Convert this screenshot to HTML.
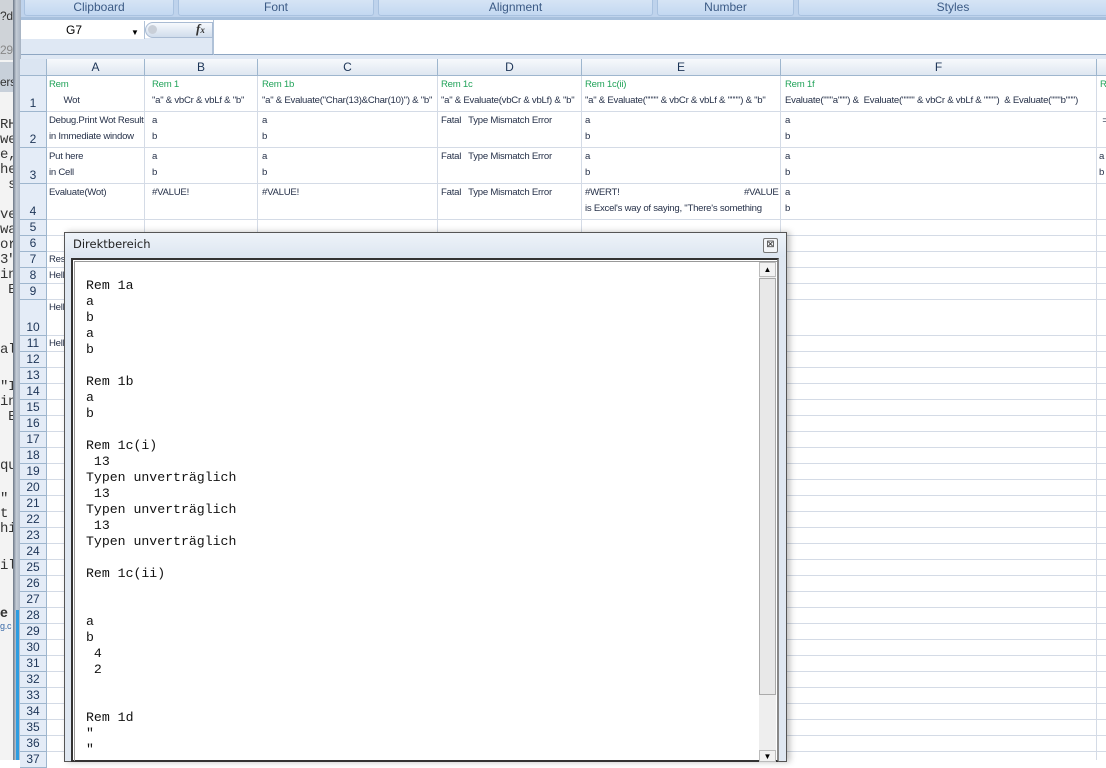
<!DOCTYPE html>
<html><head><meta charset="utf-8"><style>
*{margin:0;padding:0;box-sizing:border-box}
body{width:1106px;height:760px;overflow:hidden;position:relative;background:#fff;font-family:"Liberation Sans",Arial,sans-serif}
.a{position:absolute}
.hl{position:absolute;height:1px;background:#d4dbe6}
.vl{position:absolute;width:1px;background:#d4dbe6}
.rh{position:absolute;left:20px;width:27px;background:#e4ecf7;border-bottom:1px solid #9eb6ce;border-right:1px solid #9eb6ce;font-size:12px;color:#1d3557;text-align:center;display:flex;align-items:flex-end;justify-content:center;padding-bottom:1px}
.ch{position:absolute;top:59px;height:17px;background:linear-gradient(#f7f9fc,#dfe7f1);border-right:1px solid #9eb6ce;border-bottom:1px solid #9eb6ce;font-size:12px;color:#1d3557;text-align:center;line-height:16px}
.t{position:absolute;font-size:9.6px;line-height:16px;color:#27324a;white-space:pre;letter-spacing:-0.25px}
.g{color:#22a35a}
.grp{position:absolute;top:0;height:16px;background:linear-gradient(#d6e4f5,#c3d8f1);border:1px solid #a9c2e0;border-top:none;border-radius:0 0 3px 3px;font-size:12px;color:#3b5a85;text-align:center;line-height:15px}
.mono{position:absolute;left:86px;top:262px;font-family:"Liberation Mono","Courier New",monospace;font-size:13.2px;line-height:16px;color:#111;white-space:pre}
</style></head><body>
<div class="a" style="left:0;top:0;width:14px;height:760px;background:#f3f3f3"></div>
<div class="a" style="left:0;top:0;width:14px;height:60px;background:#cfd3d8"></div>
<div class="a" style="left:0;top:62px;width:14px;height:30px;background:#c8d0da"></div>
<div class="t" style="left:0;top:8px;font-size:12px;color:#333">?d</div>
<div class="t" style="left:0;top:42px;font-size:12px;color:#888">29</div>
<div class="t" style="left:0;top:74px;font-size:12px;color:#333">ers</div>
<div class="t" style="left:0;top:118px;font-size:14px;color:#333;line-height:15px;font-family:'Liberation Mono',monospace">RH
we
e,
he
 s

ve
wa
or
3"
ini
 E</div>
<div class="t" style="left:0;top:342px;font-size:14px;color:#333;font-family:'Liberation Mono',monospace">ale</div>
<div class="t" style="left:0;top:380px;font-size:14px;color:#333;line-height:15px;font-family:'Liberation Mono',monospace">"I
ini
 E</div>
<div class="t" style="left:0;top:458px;font-size:14px;color:#333;font-family:'Liberation Mono',monospace">qu</div>
<div class="t" style="left:0;top:492px;font-size:14px;color:#333;line-height:15px;font-family:'Liberation Mono',monospace">"
t
hi</div>
<div class="t" style="left:0;top:558px;font-size:14px;color:#333;font-family:'Liberation Mono',monospace">ill</div>
<div class="t" style="left:0;top:604px;font-size:14px;font-weight:bold;color:#333">e</div>
<div class="t" style="left:0;top:618px;font-size:9px;color:#3a6aa8">g.c</div>
<div class="a" style="left:13px;top:0;width:8px;height:760px;background:linear-gradient(90deg,#6b7686,#c4ccd6 40%,#a6b2c2)"></div>
<div class="a" style="left:16px;top:610px;width:3px;height:150px;background:#2d9ce0"></div>

<div class="a" style="left:21px;top:0;width:1085px;height:19px;background:#bfd3ec"></div>
<div class="grp" style="left:24px;width:150px">Clipboard</div>
<div class="grp" style="left:178px;width:196px">Font</div>
<div class="grp" style="left:378px;width:275px">Alignment</div>
<div class="grp" style="left:657px;width:137px">Number</div>
<div class="grp" style="left:798px;width:310px">Styles</div>
<div class="a" style="left:21px;top:17px;width:1085px;height:3px;background:#a7c0dd"></div>
<div class="a" style="left:21px;top:20px;width:1085px;height:35px;background:#fff;border-bottom:1px solid #8ea6c2"></div>
<div class="a" style="left:21px;top:38px;width:192px;height:16px;background:#dfe8f4;border-right:1px solid #b0c2d8"></div>
<div class="a" style="left:21px;top:21px;width:124px;height:18px;background:#fff;border-right:1px solid #b0c2d8;font-size:12px;line-height:18px;padding-left:45px;color:#000">G7</div>
<div class="a" style="left:131px;top:28px;font-size:8px">▼</div>
<div class="a" style="left:145px;top:22px;width:68px;height:16px;background:linear-gradient(#f6f9fd,#d1ddec);border-radius:8px 0 0 8px;border:1px solid #a9bbd3"></div>
<div class="a" style="left:148px;top:25px;width:9px;height:9px;border-radius:50%;background:#c9cfd8"></div>
<div class="a" style="left:196px;top:21px;font-family:'Liberation Serif',serif;font-style:italic;font-weight:bold;font-size:13px;color:#333">f<span style="font-size:9px">x</span></div>
<div class="a" style="left:213px;top:20px;width:1px;height:35px;background:#b0c2d8"></div>
<div class="a" style="left:21px;top:55px;width:1085px;height:4px;background:#dfe8f4"></div>

<div class="a" style="left:20px;top:59px;width:27px;height:17px;background:#dbe5f2;border-right:1px solid #9eb6ce;border-bottom:1px solid #9eb6ce"></div>
<div class="ch" style="left:47px;width:98px">A</div>
<div class="ch" style="left:145px;width:113px">B</div>
<div class="ch" style="left:258px;width:180px">C</div>
<div class="ch" style="left:438px;width:144px">D</div>
<div class="ch" style="left:582px;width:199px">E</div>
<div class="ch" style="left:781px;width:316px">F</div>
<div class="ch" style="left:1097px;width:20px"></div>

<div class="vl" style="left:144px;top:76px;height:684px"></div>
<div class="vl" style="left:257px;top:76px;height:684px"></div>
<div class="vl" style="left:437px;top:76px;height:684px"></div>
<div class="vl" style="left:581px;top:76px;height:684px"></div>
<div class="vl" style="left:780px;top:76px;height:684px"></div>
<div class="vl" style="left:1096px;top:76px;height:684px"></div>

<div class="rh" style="top:76px;height:36px">1</div><div class="hl" style="left:47px;top:111px;width:1059px"></div>
<div class="rh" style="top:112px;height:36px">2</div><div class="hl" style="left:47px;top:147px;width:1059px"></div>
<div class="rh" style="top:148px;height:36px">3</div><div class="hl" style="left:47px;top:183px;width:1059px"></div>
<div class="rh" style="top:184px;height:36px">4</div><div class="hl" style="left:47px;top:219px;width:1059px"></div>
<div class="rh" style="top:220px;height:16px">5</div><div class="hl" style="left:47px;top:235px;width:1059px"></div>
<div class="rh" style="top:236px;height:16px">6</div><div class="hl" style="left:47px;top:251px;width:1059px"></div>
<div class="rh" style="top:252px;height:16px">7</div><div class="hl" style="left:47px;top:267px;width:1059px"></div>
<div class="rh" style="top:268px;height:16px">8</div><div class="hl" style="left:47px;top:283px;width:1059px"></div>
<div class="rh" style="top:284px;height:16px">9</div><div class="hl" style="left:47px;top:299px;width:1059px"></div>
<div class="rh" style="top:300px;height:36px">10</div><div class="hl" style="left:47px;top:335px;width:1059px"></div>
<div class="rh" style="top:336px;height:16px">11</div><div class="hl" style="left:47px;top:351px;width:1059px"></div>
<div class="rh" style="top:352px;height:16px">12</div><div class="hl" style="left:47px;top:367px;width:1059px"></div>
<div class="rh" style="top:368px;height:16px">13</div><div class="hl" style="left:47px;top:383px;width:1059px"></div>
<div class="rh" style="top:384px;height:16px">14</div><div class="hl" style="left:47px;top:399px;width:1059px"></div>
<div class="rh" style="top:400px;height:16px">15</div><div class="hl" style="left:47px;top:415px;width:1059px"></div>
<div class="rh" style="top:416px;height:16px">16</div><div class="hl" style="left:47px;top:431px;width:1059px"></div>
<div class="rh" style="top:432px;height:16px">17</div><div class="hl" style="left:47px;top:447px;width:1059px"></div>
<div class="rh" style="top:448px;height:16px">18</div><div class="hl" style="left:47px;top:463px;width:1059px"></div>
<div class="rh" style="top:464px;height:16px">19</div><div class="hl" style="left:47px;top:479px;width:1059px"></div>
<div class="rh" style="top:480px;height:16px">20</div><div class="hl" style="left:47px;top:495px;width:1059px"></div>
<div class="rh" style="top:496px;height:16px">21</div><div class="hl" style="left:47px;top:511px;width:1059px"></div>
<div class="rh" style="top:512px;height:16px">22</div><div class="hl" style="left:47px;top:527px;width:1059px"></div>
<div class="rh" style="top:528px;height:16px">23</div><div class="hl" style="left:47px;top:543px;width:1059px"></div>
<div class="rh" style="top:544px;height:16px">24</div><div class="hl" style="left:47px;top:559px;width:1059px"></div>
<div class="rh" style="top:560px;height:16px">25</div><div class="hl" style="left:47px;top:575px;width:1059px"></div>
<div class="rh" style="top:576px;height:16px">26</div><div class="hl" style="left:47px;top:591px;width:1059px"></div>
<div class="rh" style="top:592px;height:16px">27</div><div class="hl" style="left:47px;top:607px;width:1059px"></div>
<div class="rh" style="top:608px;height:16px">28</div><div class="hl" style="left:47px;top:623px;width:1059px"></div>
<div class="rh" style="top:624px;height:16px">29</div><div class="hl" style="left:47px;top:639px;width:1059px"></div>
<div class="rh" style="top:640px;height:16px">30</div><div class="hl" style="left:47px;top:655px;width:1059px"></div>
<div class="rh" style="top:656px;height:16px">31</div><div class="hl" style="left:47px;top:671px;width:1059px"></div>
<div class="rh" style="top:672px;height:16px">32</div><div class="hl" style="left:47px;top:687px;width:1059px"></div>
<div class="rh" style="top:688px;height:16px">33</div><div class="hl" style="left:47px;top:703px;width:1059px"></div>
<div class="rh" style="top:704px;height:16px">34</div><div class="hl" style="left:47px;top:719px;width:1059px"></div>
<div class="rh" style="top:720px;height:16px">35</div><div class="hl" style="left:47px;top:735px;width:1059px"></div>
<div class="rh" style="top:736px;height:16px">36</div><div class="hl" style="left:47px;top:751px;width:1059px"></div>
<div class="rh" style="top:752px;height:16px">37</div>

<div class="t" style="left:49px;top:77px"><span class="g">Rem</span>
      Wot</div>
<div class="t" style="left:152px;top:77px"><span class="g">Rem 1</span>
"a" &amp; vbCr &amp; vbLf &amp; "b"</div>
<div class="t" style="left:262px;top:77px"><span class="g">Rem 1b</span>
"a" &amp; Evaluate("Char(13)&amp;Char(10)") &amp; "b"</div>
<div class="t" style="left:441px;top:77px"><span class="g">Rem 1c</span>
"a" &amp; Evaluate(vbCr &amp; vbLf) &amp; "b"</div>
<div class="t" style="left:585px;top:77px"><span class="g">Rem 1c(ii)</span>
"a" &amp; Evaluate("""" &amp; vbCr &amp; vbLf &amp; """") &amp; "b"</div>
<div class="t" style="left:785px;top:77px"><span class="g">Rem 1f</span>
Evaluate("""a""") &amp;  Evaluate("""" &amp; vbCr &amp; vbLf &amp; """")  &amp; Evaluate("""b""")</div>
<div class="t" style="left:1100px;top:77px"><span class="g">R</span></div>

<div class="t" style="left:49px;top:113px">Debug.Print Wot Result
in Immediate window</div>
<div class="t" style="left:152px;top:113px">a
b</div>
<div class="t" style="left:262px;top:113px">a
b</div>
<div class="t" style="left:441px;top:113px">Fatal   Type Mismatch Error</div>
<div class="t" style="left:585px;top:113px">a
b</div>
<div class="t" style="left:785px;top:113px">a
b</div>
<div class="t" style="left:1100px;top:113px"> =</div>

<div class="t" style="left:49px;top:149px">Put here
in Cell</div>
<div class="t" style="left:152px;top:149px">a
b</div>
<div class="t" style="left:262px;top:149px">a
b</div>
<div class="t" style="left:441px;top:149px">Fatal   Type Mismatch Error</div>
<div class="t" style="left:585px;top:149px">a
b</div>
<div class="t" style="left:785px;top:149px">a
b</div>
<div class="t" style="left:1099px;top:149px">a
b</div>

<div class="t" style="left:49px;top:185px">Evaluate(Wot)</div>
<div class="t" style="left:152px;top:185px">#VALUE!</div>
<div class="t" style="left:262px;top:185px">#VALUE!</div>
<div class="t" style="left:441px;top:185px">Fatal   Type Mismatch Error</div>
<div class="t" style="left:585px;top:185px">#WERT!</div>
<div class="t" style="left:744px;top:185px">#VALUE</div>
<div class="t" style="left:585px;top:201px">is Excel's way of saying, "There's something</div>
<div class="t" style="left:785px;top:185px">a
b</div>

<div class="t" style="left:49px;top:252px">Res</div>
<div class="t" style="left:49px;top:268px">Hell</div>
<div class="t" style="left:49px;top:300px">Hell</div>
<div class="t" style="left:49px;top:336px">Hell</div>

<div class="a" style="left:64px;top:232px;width:723px;height:530px;background:#dfe7f1;border:1px solid #555;box-shadow:3px 0 6px rgba(0,0,0,.25)"></div>
<div class="a" style="left:65px;top:233px;width:721px;height:24px;background:linear-gradient(#eef3f9,#dde6f1)"></div>
<div class="a" style="left:73px;top:237px;font-family:'DejaVu Sans',sans-serif;font-size:11.5px;color:#222">Direktbereich</div>
<div class="a" style="left:763px;top:238px;width:15px;height:15px;border:1px solid #777;border-radius:2px;background:#f4f6f9;font-size:10px;line-height:12px;text-align:center;color:#333">⊠</div>
<div class="a" style="left:71px;top:258px;width:708px;height:504px;background:#fff;border:2px solid #333;border-right-color:#888"></div>
<div class="a" style="left:74px;top:261px;width:703px;height:500px;border-top:1px solid #999;border-left:1px solid #999"></div>
<div class="a" style="left:759px;top:262px;width:17px;height:498px;background:#eeeeee"></div>
<div class="a" style="left:759px;top:262px;width:17px;height:15px;background:#f2f2f2;border:1px solid #bbb;font-size:8px;text-align:center;line-height:13px">▲</div>
<div class="a" style="left:759px;top:278px;width:17px;height:417px;background:#e8e8e8;border:1px solid #aaa"></div>
<div class="a" style="left:759px;top:750px;width:17px;height:12px;background:#f2f2f2;border:1px solid #bbb;font-size:8px;text-align:center;line-height:12px">▼</div>

<div class="mono">
Rem 1a
a
b
a
b

Rem 1b
a
b

Rem 1c(i)
 13
Typen unverträglich
 13
Typen unverträglich
 13
Typen unverträglich

Rem 1c(ii)


a
b
 4
 2


Rem 1d
"
"</div>
</body></html>
